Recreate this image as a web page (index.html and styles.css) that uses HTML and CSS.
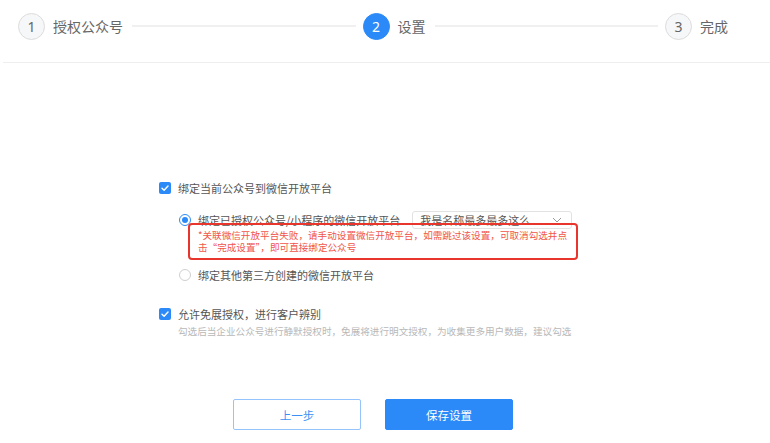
FILE: index.html
```html
<!DOCTYPE html>
<html lang="zh-CN">
<head>
<meta charset="utf-8">
<title>设置</title>
<link rel="stylesheet" href="styles.css">
</head>
<body>
<header class="steps">
  <div class="step done">
    <span class="step-num">1</span>
    <span class="step-title">授权公众号</span>
    <span class="step-line"></span>
  </div>
  <div class="step active">
    <span class="step-num">2</span>
    <span class="step-title">设置</span>
    <span class="step-line"></span>
  </div>
  <div class="step last">
    <span class="step-num">3</span>
    <span class="step-title">完成</span>
  </div>
</header>

<main class="form">
  <div class="check-row">
    <span class="checkbox"><svg viewBox="0 0 12 12" width="12" height="12"><path d="M3 6.2 L5.1 8.2 L9 4" fill="none" stroke="#fff" stroke-width="1.4" stroke-linecap="round" stroke-linejoin="round"/></svg></span>
    <span class="label">绑定当前公众号到微信开放平台</span>
  </div>

  <div class="radio-group">
    <div class="radio-row first">
      <span class="radio checked"></span>
      <span class="label">绑定已授权公众号/小程序的微信开放平台</span>
      <span class="select">
        <span class="select-text">我是名称最多最多这么</span>
        <svg class="chev" viewBox="0 0 10 6" width="10" height="6"><path d="M1 1 L5 5 L9 1" fill="none" stroke="#999" stroke-width="1"/></svg>
      </span>
    </div>
    <p class="error">*关联微信开放平台失败，请手动设置微信开放平台，如需跳过该设置，可取消勾选并点击“完成设置”，即可直接绑定公众号</p>
    <div class="radio-row second">
      <span class="radio"></span>
      <span class="label">绑定其他第三方创建的微信开放平台</span>
    </div>
    <div class="annotation"></div>
  </div>

  <div class="check-row second">
    <span class="checkbox"><svg viewBox="0 0 12 12" width="12" height="12"><path d="M3 6.2 L5.1 8.2 L9 4" fill="none" stroke="#fff" stroke-width="1.4" stroke-linecap="round" stroke-linejoin="round"/></svg></span>
    <span class="label">允许免展授权，进行客户辨别</span>
  </div>
  <p class="hint">勾选后当企业公众号进行静默授权时，免展将进行明文授权，为收集更多用户数据，建议勾选</p>

  <div class="actions">
    <button class="btn btn-ghost" type="button">上一步</button>
    <button class="btn btn-primary" type="button">保存设置</button>
  </div>
</main>
</body>
</html>
```
FILE: styles.css
```css
* { box-sizing: border-box; }
html, body { margin: 0; padding: 0; background: #fff; }
body {
  font-family: "Noto Sans CJK SC", "Noto Sans", sans-serif;
  color: #555;
  width: 770px;
  height: 443px;
  overflow: hidden;
}

/* steps header */
.steps {
  display: flex;
  align-items: center;
  margin-left: 3px;
  padding: 12px 42px 22px 15px;
  height: 63px;
  border-bottom: 1px solid #eeeeee;
}
.step {
  display: flex;
  align-items: center;
  flex: 1 1 auto;
}
.step.last { flex: 0 0 auto; }
.step-num {
  width: 27px;
  height: 27px;
  border-radius: 50%;
  border: 1px solid #dcdcdc;
  background: #f6f7f9;
  color: #666;
  font-size: 14px;
  display: flex;
  align-items: center;
  justify-content: center;
  flex: 0 0 auto;
  font-family: "Noto Sans", sans-serif;
}
.step.active .step-num {
  background: #2b8af7;
  border-color: #2b8af7;
  color: #fff;
}
.step-title {
  margin-left: 8px;
  font-size: 14px;
  color: #666;
  white-space: nowrap;
  line-height: 20px;
}
.step-line {
  flex: 1 1 0;
  height: 2px;
  background: #f0f0f0;
  margin: 0 7px 0 9px;
}

/* form */
.form {
  padding-left: 159px;
  padding-top: 118px;
}
.check-row {
  display: flex;
  align-items: center;
  height: 14px;
}
.check-row.second { margin-top: 25px; }
.checkbox {
  width: 12px;
  height: 12px;
  border-radius: 2px;
  background: #2b8af7;
  display: inline-flex;
  flex: 0 0 auto;
  margin-right: 7px;
}
.label {
  font-size: 11px;
  line-height: 14px;
  color: #555;
  white-space: nowrap;
}

.radio-group {
  position: relative;
  padding-left: 20px;
  margin-top: 16px;
}
.radio-row {
  display: flex;
  align-items: center;
}
.radio-row.first { height: 18px; }
.radio-row.second { height: 14px; margin-top: 15px; }
.radio {
  width: 12px;
  height: 12px;
  border-radius: 50%;
  border: 1px solid #cfcfcf;
  background: #fff;
  flex: 0 0 auto;
  margin-right: 7px;
  position: relative;
}
.radio.checked { border-color: #2b8af7; }
.radio.checked::after {
  content: "";
  position: absolute;
  left: 2px;
  top: 2px;
  width: 6px;
  height: 6px;
  border-radius: 50%;
  background: #2b8af7;
}
.select {
  margin-left: 12px;
  width: 160px;
  height: 18px;
  border: 1px solid #e2e2e2;
  border-radius: 3px;
  display: flex;
  align-items: center;
  justify-content: space-between;
  padding: 0 9px 0 7px;
}
.select-text {
  font-size: 11px;
  color: #555;
  white-space: nowrap;
}
.chev { flex: 0 0 auto; }

.error {
  margin: 0;
  padding-left: 19px;
  width: 395px;
  font-size: 9.6px;
  line-height: 12px;
  color: #f0564a;
}

.annotation {
  position: absolute;
  left: 29px;
  top: 12px;
  width: 390px;
  height: 37px;
  border: 2px solid #e8362c;
  border-radius: 4px;
  pointer-events: none;
}

.hint {
  margin: 3px 0 0 19px;
  font-size: 9.6px;
  line-height: 14px;
  color: #b8b8b8;
  white-space: nowrap;
}

.actions {
  display: flex;
  gap: 24px;
  margin-top: 61px;
  padding-left: 74px;
}
.btn {
  width: 128px;
  height: 31px;
  border-radius: 2px;
  font-family: "Noto Sans CJK SC", sans-serif;
  font-size: 11.5px;
  cursor: pointer;
}
.btn-ghost {
  background: #fff;
  border: 1px solid #94c4fb;
  color: #3a90f5;
}
.btn-primary {
  background: #2b8af7;
  border: 1px solid #2b8af7;
  color: #fff;
}
```
